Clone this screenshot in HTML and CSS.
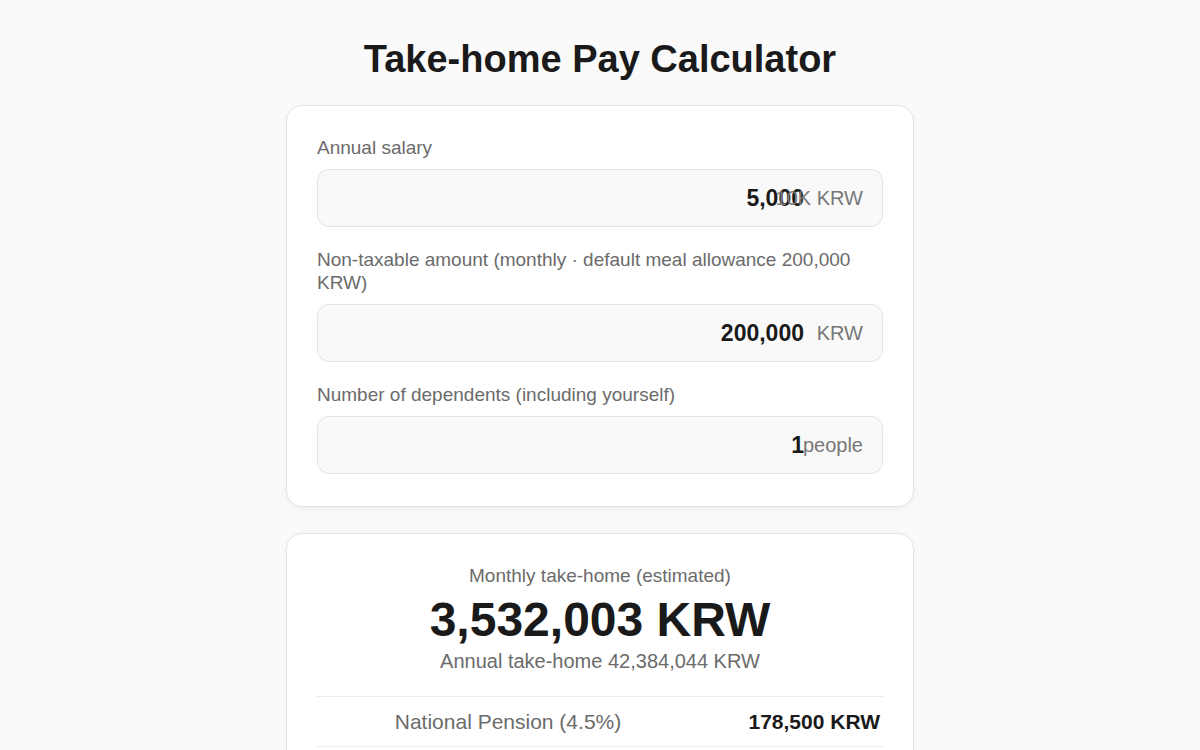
FILE: index.html
```html
<!DOCTYPE html>
<html lang="en">
<head>
    <meta charset="UTF-8">
    <meta name="viewport" content="width=device-width, initial-scale=1.0">
    <title>Take-home Pay Calculator</title>
    <link rel="stylesheet" href="styles.css">
</head>
<body>

<div class="wrap">
    <h1>Take-home Pay Calculator</h1>

    <div class="card">
        <div class="field">
            <label for="salary">Annual salary</label>
            <div class="input-box">
                <input type="text" id="salary" value="5,000">
                <span class="suffix">10K KRW</span>
            </div>
        </div>
        <div class="field">
            <label for="nontax">Non-taxable amount (monthly · default meal allowance 200,000 KRW)</label>
            <div class="input-box">
                <input type="text" id="nontax" value="200,000">
                <span class="suffix">KRW</span>
            </div>
        </div>
        <div class="field">
            <label for="family">Number of dependents (including yourself)</label>
            <div class="input-box">
                <input type="text" id="family" value="1">
                <span class="suffix">people</span>
            </div>
        </div>
    </div>

    <div class="card result">
        <p class="result-label">Monthly take-home (estimated)</p>
        <p class="result-value">3,532,003 KRW</p>
        <p class="result-sub">Annual take-home 42,384,044 KRW</p>

        <table class="breakdown">
            <tr>
                <th>National Pension (4.5%)</th>
                <td>178,500 KRW</td>
            </tr>
            <tr>
                <th>Health Insurance (3.545%)</th>
                <td>140,618 KRW</td>
            </tr>
            <tr>
                <th>Long-term Care (12.95%)</th>
                <td>18,210 KRW</td>
            </tr>
        </table>
    </div>
</div>

</body>
</html>
```

FILE: styles.css
```css
* {
    box-sizing: border-box;
}

body {
    margin: 0;
    background: #fafafa;
    font-family: "Liberation Sans", Arial, Helvetica, sans-serif;
    color: #1a1a1a;
}

.wrap {
    width: 628px;
    margin: 0 auto;
    padding-top: 36px;
}

h1 {
    margin: 0 0 23px;
    font-size: 38px;
    line-height: 46px;
    text-align: center;
    color: #1a1a1a;
}

.card {
    background: #fff;
    border: 1px solid #e4e4e4;
    border-radius: 16px;
    box-shadow: 0 2px 6px rgba(0, 0, 0, 0.05);
    padding: 30px 30px 32px;
    margin-bottom: 26px;
}

.field + .field {
    margin-top: 21px;
}

.field label {
    display: block;
    font-size: 19px;
    line-height: 23px;
    color: #6b6b6b;
    margin-bottom: 10px;
}

.input-box {
    position: relative;
}

.input-box input {
    display: block;
    width: 100%;
    height: 58px;
    padding: 0 78px 0 16px;
    border: 1px solid #e2e2e2;
    border-radius: 12px;
    background: #f9f9f9;
    font-family: inherit;
    font-size: 23px;
    font-weight: bold;
    color: #1a1a1a;
    text-align: right;
    outline: none;
}

.suffix {
    position: absolute;
    right: 20px;
    top: 50%;
    transform: translateY(-50%);
    font-size: 20px;
    color: #777;
    pointer-events: none;
}

.result {
    text-align: center;
    padding-top: 30px;
}

.result p {
    margin: 0;
}

.result-label {
    font-size: 19px;
    line-height: 23px;
    color: #6b6b6b;
}

.result .result-value {
    font-size: 48px;
    font-weight: bold;
    line-height: 58px;
    margin: 4px 0 0;
}

.result-sub {
    font-size: 20px;
    line-height: 24px;
    color: #6b6b6b;
}

.breakdown {
    width: 100%;
    margin-top: 23px;
    border-collapse: collapse;
}

.breakdown th,
.breakdown td {
    height: 50px;
    border-top: 1px solid #ececec;
    font-size: 21px;
    padding: 0 3px;
}

.breakdown th {
    width: 382px;
    font-weight: normal;
    color: #6b6b6b;
    text-align: center;
}

.breakdown td {
    font-weight: bold;
    text-align: right;
}
```
